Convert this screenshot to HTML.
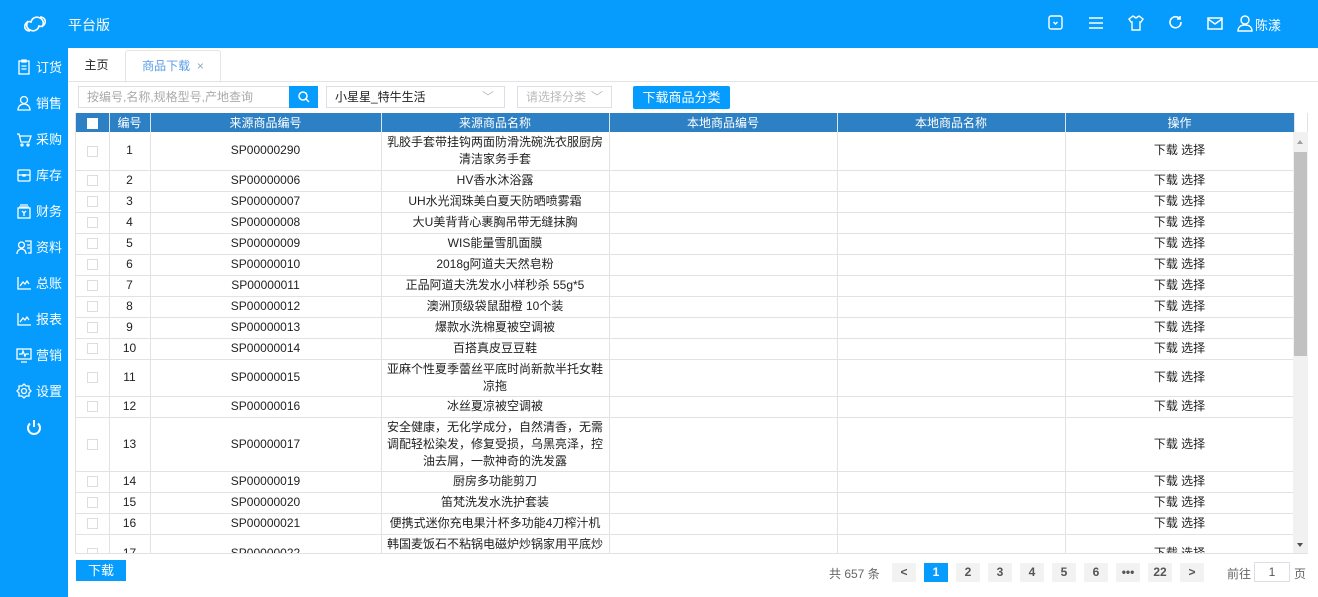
<!DOCTYPE html>
<html><head><meta charset="utf-8"><style>
*{box-sizing:border-box;margin:0;padding:0}
body{width:1318px;height:597px;overflow:hidden;background:#fff;font-family:"Liberation Sans","Noto Sans CJK SC",sans-serif;font-size:12px;color:#222;position:relative}
.top{position:absolute;left:0;top:0;width:1318px;height:48px;background:#059cfe}
.side{position:absolute;left:0;top:48px;width:68px;height:549px;background:#059cfe}
.side div{position:absolute;left:16px;color:#fff;font-size:13px;display:flex;align-items:center;gap:4px}
.side svg{width:16px;height:16px}
.ti{position:absolute;top:14px;width:18px;height:18px}
.tabs{position:absolute;left:68px;top:48px;width:1250px;height:34px;border-bottom:1px solid #e4e4e4}
.tab{position:absolute;top:2px;height:32px;line-height:31px;font-size:12px;text-align:center}
.in{position:absolute;border:1px solid #dcdfe6;height:22px;line-height:20px;padding-left:8px;color:#aaa;font-size:12px;background:#fff}
.btn{position:absolute;background:#059cfe;color:#fff;text-align:center;font-size:12px;border-radius:2px}
.tw{position:absolute;left:75px;top:113px;width:1233px;height:441px;overflow:hidden;border:1px solid #e2e2e2;border-top:none}
table{border-collapse:collapse;table-layout:fixed;width:1218px}
th{background:#2d80c4;color:#fff;font-weight:normal;height:19px;border-right:1px solid #dbe6f0;font-size:12px}
td{border-right:1px solid #e2e2e2;border-bottom:1px solid #e2e2e2;text-align:center;line-height:17px;font-size:12px}
.cb{display:inline-block;width:11px;height:11px;border:1px solid #ddd;background:#fff;vertical-align:middle}
th .cb{border-color:#fff}
.sb{position:absolute;left:1293px;top:132px;width:15px;height:421px;background:#f1f1f1}
.pg{position:absolute;top:563px;height:19px;line-height:19px;background:#f2f2f2;color:#555;font-weight:bold;text-align:center;font-size:12px;width:24px}
</style></head><body>
<div class="top">
<svg style="position:absolute;left:22px;top:13px" width="26" height="22" viewBox="0 0 26 22" fill="none" stroke="#fff" stroke-width="1.6"><path d="M8 18c-4 0-6-3-5-6s4-4 6-3c1-4 5-6 9-4s4 6 2 9"/><path d="M18 4c4 0 6 3 5 6s-4 4-6 3c-1 4-5 6-9 4s-4-6-2-9"/></svg>
<div style="position:absolute;left:68px;top:15px;color:#fff;font-size:14px">平台版</div>
<svg class="ti" style="left:1047px" viewBox="0 0 18 18" fill="none" stroke="#fff" stroke-width="1.4"><rect x="2" y="2" width="13" height="13" rx="2"/><path d="M6.5 8l2 2 2-2"/></svg>
<svg class="ti" style="left:1087px" viewBox="0 0 18 18" stroke="#fff" stroke-width="1.6"><path d="M2 4h14M2 9h14M2 14h14"/></svg>
<svg class="ti" style="left:1127px" viewBox="0 0 18 18" fill="none" stroke="#fff" stroke-width="1.4"><path d="M6 2l3 2 3-2 4 3-2 3h-1v8H5V8H4L2 5z"/></svg>
<svg class="ti" style="left:1167px" viewBox="0 0 18 18" fill="none" stroke="#fff" stroke-width="1.6"><path d="M14 8a5.5 5.5 0 1 1-2-4"/><path d="M13 2v3h-3"/></svg>
<svg class="ti" style="left:1206px" viewBox="0 0 18 18" fill="none" stroke="#fff" stroke-width="1.5"><rect x="2" y="4" width="14" height="11"/><path d="M2 5l7 5 7-5"/></svg>
<svg class="ti" style="left:1236px;top:14px" viewBox="0 0 18 18" fill="none" stroke="#fff" stroke-width="1.4"><circle cx="9" cy="6" r="4"/><path d="M2 17c0-4 3-6 7-6s7 2 7 6z"/></svg>
<div style="position:absolute;left:1255px;top:15px;color:#fff;font-size:13px">陈漾</div>
</div>
<div class="side">
<div style="top:9px"><svg viewBox="0 0 16 16" fill="none" stroke="#fff" stroke-width="1.3"><rect x="3" y="2" width="10" height="13"/><path d="M6 1h4v2H6zM5.5 7h5M5.5 10h5"/></svg>订货</div>
<div style="top:45px"><svg viewBox="0 0 16 16" fill="none" stroke="#fff" stroke-width="1.3"><circle cx="8" cy="5" r="3.5"/><path d="M2 15c0-4 3-6 6-6s6 2 6 6z"/></svg>销售</div>
<div style="top:81px"><svg viewBox="0 0 16 16" fill="none" stroke="#fff" stroke-width="1.3"><path d="M1 3h2l2 8h8l2-6H4"/><circle cx="6" cy="14" r="1"/><circle cx="12" cy="14" r="1"/></svg>采购</div>
<div style="top:117px"><svg viewBox="0 0 16 16" fill="none" stroke="#fff" stroke-width="1.3"><rect x="2" y="3" width="12" height="11" rx="1"/><path d="M2 8h12M7 7v2h2V7"/></svg>库存</div>
<div style="top:153px"><svg viewBox="0 0 16 16" fill="none" stroke="#fff" stroke-width="1.3"><rect x="2" y="5" width="12" height="10"/><path d="M4 2h8M3 4h10M6 8l2 2 2-2M8 10v3"/></svg>财务</div>
<div style="top:189px"><svg viewBox="0 0 16 16" fill="none" stroke="#fff" stroke-width="1.3"><circle cx="5.5" cy="6" r="3"/><path d="M1 15c0-3 2-5 4.5-5S10 12 10 15M9 2h6v12h-3M11 6h3M11 9h3"/></svg>资料</div>
<div style="top:225px"><svg viewBox="0 0 16 16" fill="none" stroke="#fff" stroke-width="1.3"><path d="M2 2v12h13M4 11l3-4 2 2 2-3 2 3"/></svg>总账</div>
<div style="top:261px"><svg viewBox="0 0 16 16" fill="none" stroke="#fff" stroke-width="1.3"><path d="M2 2v12h13M4 11l3-4 2 2 2-3 2 3"/></svg>报表</div>
<div style="top:297px"><svg viewBox="0 0 16 16" fill="none" stroke="#fff" stroke-width="1.3"><rect x="1" y="2" width="14" height="10"/><path d="M5 15h6M3 7h3l1-3 2 5 1-2h3"/></svg>营销</div>
<div style="top:333px"><svg viewBox="0 0 16 16" fill="none" stroke="#fff" stroke-width="1.3"><circle cx="8" cy="8" r="2.5"/><path d="M8 1l2 2h3v3l2 2-2 2v3h-3l-2 2-2-2H3v-3L1 8l2-2V3h3z"/></svg>设置</div>
<svg style="position:absolute;left:25px;top:371px;width:18px;height:18px" viewBox="0 0 18 18" fill="none" stroke="#fff" stroke-width="2"><path d="M5 4.5a6 6 0 1 0 8 0M9 1v7"/></svg>
</div>
<div class="tabs">
<div class="tab" style="left:0;width:57px;color:#222">主页</div>
<div class="tab" style="left:57px;width:96px;color:#5a9ce8;border:1px solid #e4e4e4;border-bottom:1px solid #fff;height:33px;border-radius:3px 3px 0 0">商品下载 <span style="color:#8ab">&nbsp;×</span></div>
</div>
<div class="in" style="left:78px;top:86px;width:212px">按编号,名称,规格型号,产地查询</div>
<div class="btn" style="left:289px;top:86px;width:29px;height:22px;border-radius:0"><svg width="14" height="14" viewBox="0 0 14 14" style="margin-top:4px" fill="none" stroke="#fff" stroke-width="1.5"><circle cx="6" cy="6" r="4"/><path d="M9 9l3 3"/></svg></div>
<div class="in" style="left:326px;top:86px;width:179px;color:#222">小星星_特牛生活<span style="position:absolute;right:10px;color:#bbb">﹀</span></div>
<div class="in" style="left:517px;top:86px;width:95px;color:#bbb">请选择分类<span style="position:absolute;right:8px">﹀</span></div>
<div class="btn" style="left:633px;top:86px;width:97px;height:23px;line-height:23px;font-size:13px">下载商品分类</div>
<div class="tw"><table>
<colgroup><col style="width:33px"><col style="width:41px"><col style="width:231px"><col style="width:228px"><col style="width:228px"><col style="width:228px"><col style="width:229px"></colgroup>
<tr><th><span class="cb"></span></th><th>编号</th><th>来源商品编号</th><th>来源商品名称</th><th>本地商品编号</th><th>本地商品名称</th><th>操作</th></tr>
<tr style="height:38px"><td><span class="cb"></span></td><td>1</td><td>SP00000290</td><td>乳胶手套带挂钩两面防滑洗碗洗衣服厨房清洁家务手套</td><td></td><td></td><td>下载 选择</td></tr>
<tr style="height:21px"><td><span class="cb"></span></td><td>2</td><td>SP00000006</td><td>HV香水沐浴露</td><td></td><td></td><td>下载 选择</td></tr>
<tr style="height:21px"><td><span class="cb"></span></td><td>3</td><td>SP00000007</td><td>UH水光润珠美白夏天防晒喷雾霜</td><td></td><td></td><td>下载 选择</td></tr>
<tr style="height:21px"><td><span class="cb"></span></td><td>4</td><td>SP00000008</td><td>大U美背背心裹胸吊带无缝抹胸</td><td></td><td></td><td>下载 选择</td></tr>
<tr style="height:21px"><td><span class="cb"></span></td><td>5</td><td>SP00000009</td><td>WIS能量雪肌面膜</td><td></td><td></td><td>下载 选择</td></tr>
<tr style="height:21px"><td><span class="cb"></span></td><td>6</td><td>SP00000010</td><td>2018g阿道夫天然皂粉</td><td></td><td></td><td>下载 选择</td></tr>
<tr style="height:21px"><td><span class="cb"></span></td><td>7</td><td>SP00000011</td><td>正品阿道夫洗发水小样秒杀 55g*5</td><td></td><td></td><td>下载 选择</td></tr>
<tr style="height:21px"><td><span class="cb"></span></td><td>8</td><td>SP00000012</td><td>澳洲顶级袋鼠甜橙 10个装</td><td></td><td></td><td>下载 选择</td></tr>
<tr style="height:21px"><td><span class="cb"></span></td><td>9</td><td>SP00000013</td><td>爆款水洗棉夏被空调被</td><td></td><td></td><td>下载 选择</td></tr>
<tr style="height:21px"><td><span class="cb"></span></td><td>10</td><td>SP00000014</td><td>百搭真皮豆豆鞋</td><td></td><td></td><td>下载 选择</td></tr>
<tr style="height:37px"><td><span class="cb"></span></td><td>11</td><td>SP00000015</td><td>亚麻个性夏季蕾丝平底时尚新款半托女鞋凉拖</td><td></td><td></td><td>下载 选择</td></tr>
<tr style="height:21px"><td><span class="cb"></span></td><td>12</td><td>SP00000016</td><td>冰丝夏凉被空调被</td><td></td><td></td><td>下载 选择</td></tr>
<tr style="height:54px"><td><span class="cb"></span></td><td>13</td><td>SP00000017</td><td>安全健康，无化学成分，自然清香，无需调配轻松染发，修复受损，乌黑亮泽，控油去屑，一款神奇的洗发露</td><td></td><td></td><td>下载 选择</td></tr>
<tr style="height:21px"><td><span class="cb"></span></td><td>14</td><td>SP00000019</td><td>厨房多功能剪刀</td><td></td><td></td><td>下载 选择</td></tr>
<tr style="height:21px"><td><span class="cb"></span></td><td>15</td><td>SP00000020</td><td>笛梵洗发水洗护套装</td><td></td><td></td><td>下载 选择</td></tr>
<tr style="height:21px"><td><span class="cb"></span></td><td>16</td><td>SP00000021</td><td>便携式迷你充电果汁杯多功能4刀榨汁机</td><td></td><td></td><td>下载 选择</td></tr>
<tr style="height:38px"><td><span class="cb"></span></td><td>17</td><td>SP00000022</td><td>韩国麦饭石不粘锅电磁炉炒锅家用平底炒锅</td><td></td><td></td><td>下载 选择</td></tr>
</table></div>
<div class="sb"><div style="position:absolute;left:1px;top:20px;width:13px;height:204px;background:#c1c1c1"></div><div style="position:absolute;left:4px;top:5px;border:3px solid transparent;border-bottom:4px solid #a0a0a0"></div><div style="position:absolute;left:4px;bottom:3px;border:3px solid transparent;border-top:4px solid #505050"></div></div>
<div class="btn" style="left:76px;top:560px;width:50px;height:21px;line-height:21px;font-size:13px;border-radius:0">下载</div>
<div style="position:absolute;left:829px;top:565px;color:#666;font-size:12px">共 657 条</div>
<div class="pg" style="left:892px">&lt;</div>
<div class="pg" style="left:924px;background:#059cfe;color:#fff">1</div>
<div class="pg" style="left:956px">2</div>
<div class="pg" style="left:988px">3</div>
<div class="pg" style="left:1020px">4</div>
<div class="pg" style="left:1052px">5</div>
<div class="pg" style="left:1084px">6</div>
<div class="pg" style="left:1116px">•••</div>
<div class="pg" style="left:1148px">22</div>
<div class="pg" style="left:1180px">&gt;</div>
<div style="position:absolute;left:1227px;top:565px;color:#666">前往</div>
<div style="position:absolute;left:1254px;top:562px;width:36px;height:20px;border:1px solid #dcdfe6;text-align:center;line-height:19px;color:#555">1</div>
<div style="position:absolute;left:1294px;top:565px;color:#666">页</div>
</body></html>
